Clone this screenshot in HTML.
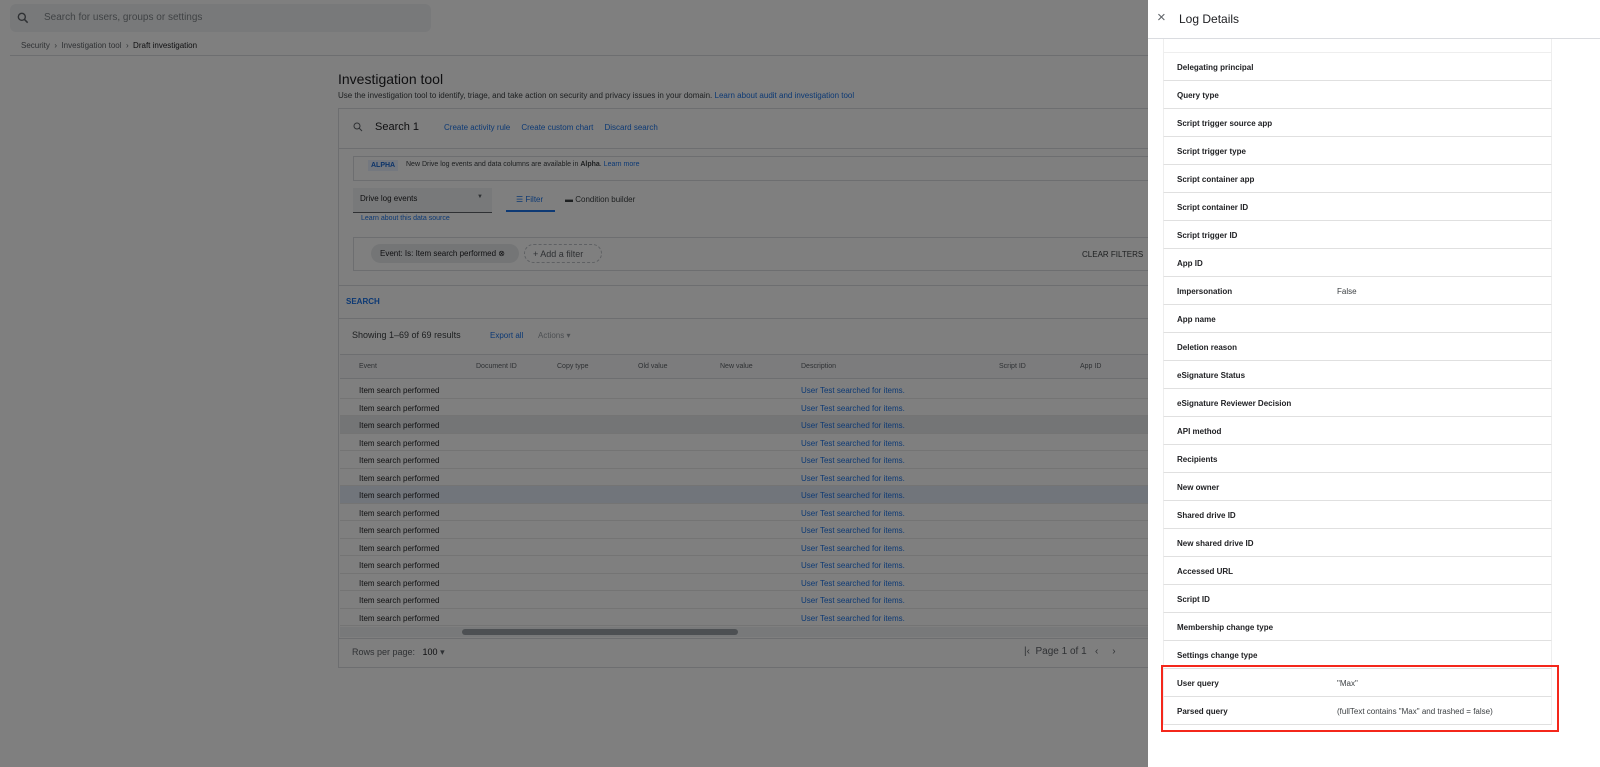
<!DOCTYPE html>
<html><head><meta charset="utf-8"><style>
*{box-sizing:border-box;margin:0;padding:0}
body{width:1600px;height:767px;overflow:hidden;font-family:"Liberation Sans",sans-serif;background:#fff;position:relative;color:#202124}
.a{position:absolute}
.blue{color:#1a73e8}
.ov{position:absolute;left:0;top:0;width:1600px;height:767px;background:rgba(0,0,0,0.5)}
.panel{position:absolute;left:1148px;top:0;width:452px;height:767px;background:#fff}
.row{position:absolute;left:15px;width:389px;height:28px;border-bottom:1px solid #e0e0e0;border-left:1px solid #eee;border-right:1px solid #eee;font-size:8px;font-weight:bold;color:#202124;padding:10px 0 0 13px}
.row span{position:absolute;left:173px;top:10px;font-weight:normal;color:#3c4043}
.tr{position:absolute;left:340px;width:810px;height:17.5px;border-bottom:1px solid #e8e8e8;font-size:8px}
.tr .e{position:absolute;left:19px;top:5px}
.tr .d{position:absolute;left:461px;top:5px;color:#1a73e8}
.th{position:absolute;top:363px;font-size:7px;color:#5f6368}
</style></head><body>
<div class="a" style="left:10px;top:4px;width:421px;height:28px;background:#f1f3f4;border-radius:6px"></div>
<svg class="a" style="left:16px;top:11px" width="14" height="14" viewBox="0 0 24 24"><circle cx="10" cy="10" r="6" fill="none" stroke="#5f6368" stroke-width="2.4"/><path d="M14.5 14.5L20 20" stroke="#5f6368" stroke-width="2.6"/></svg>
<div class="a" style="left:44px;top:12px;font-size:10px;color:#80868b">Search for users, groups or settings</div>
<div class="a" style="left:21px;top:41px;font-size:8px;color:#5f6368">Security &nbsp;›&nbsp; Investigation tool &nbsp;›&nbsp; <span style="color:#202124">Draft investigation</span></div>
<div class="a" style="left:10px;top:55px;width:1140px;height:1px;background:#dadce0"></div>
<div class="a" style="left:338px;top:71px;font-size:14px">Investigation tool</div>
<div class="a" style="left:338px;top:91px;font-size:8px;color:#3c4043">Use the investigation tool to identify, triage, and take action on security and privacy issues in your domain. <span class="blue">Learn about audit and investigation tool</span></div>
<div class="a" style="left:338px;top:108px;width:820px;height:560px;border:1px solid #dadce0;background:#fff"></div>
<svg class="a" style="left:352px;top:121px" width="12" height="12" viewBox="0 0 24 24"><circle cx="10" cy="10" r="6" fill="none" stroke="#5f6368" stroke-width="2"/><path d="M14.5 14.5L20 20" stroke="#5f6368" stroke-width="2"/></svg>
<div class="a" style="left:375px;top:121px;font-size:11px">Search 1</div>
<div class="a blue" style="left:444px;top:123px;font-size:8px">Create activity rule &nbsp;&nbsp;&nbsp; Create custom chart &nbsp;&nbsp;&nbsp; Discard search</div>
<div class="a" style="left:338px;top:148px;width:820px;height:1px;background:#dadce0"></div>
<div class="a" style="left:353px;top:156px;width:800px;height:25px;border:1px solid #dadce0"></div>
<div class="a" style="left:368px;top:160px;padding:2px 3px;background:#e8f0fe;color:#1967d2;font-size:7px;font-weight:bold">ALPHA</div>
<div class="a" style="left:406px;top:161px;font-size:7px;color:#3c4043">New Drive log events and data columns are available in <b>Alpha</b>. <span class="blue">Learn more</span></div>
<div class="a" style="left:353px;top:188px;width:139px;height:25px;background:#f1f3f4;border-bottom:1px solid #5f6368;font-size:8px;padding:6px 0 0 7px">Drive log events<span style="position:absolute;right:9px;top:6px;font-size:6px;color:#5f6368">▼</span></div>
<div class="a blue" style="left:516px;top:195px;font-size:8px">☰ Filter</div>
<div class="a" style="left:506px;top:210px;width:49px;height:2px;background:#1a73e8"></div>
<div class="a" style="left:565px;top:195px;font-size:8px;color:#3c4043">▬ Condition builder</div>
<div class="a blue" style="left:361px;top:215px;font-size:7px">Learn about this data source</div>
<div class="a" style="left:353px;top:237px;width:800px;height:34px;border:1px solid #dadce0"></div>
<div class="a" style="left:371px;top:244px;width:148px;height:19px;border-radius:10px;background:#e8eaed;font-size:8px;padding:5px 0 0 9px">Event: Is: Item search performed ⊗</div>
<div class="a" style="left:524px;top:244px;width:78px;height:19px;border-radius:10px;border:1px dashed #bdc1c6;font-size:9px;padding:4px 0 0 8px;color:#5f6368">+ Add a filter</div>
<div class="a" style="left:1082px;top:250px;font-size:8px;color:#3c4043">CLEAR FILTERS</div>
<div class="a" style="left:338px;top:285px;width:820px;height:1px;background:#dadce0"></div>
<div class="a blue" style="left:346px;top:297px;font-size:8px;font-weight:bold">SEARCH</div>
<div class="a" style="left:338px;top:318px;width:820px;height:1px;background:#dadce0"></div>
<div class="a" style="left:352px;top:330px;font-size:9px;color:#3c4043">Showing 1–69 of 69 results</div>
<div class="a blue" style="left:490px;top:331px;font-size:8px">Export all</div>
<div class="a" style="left:538px;top:331px;font-size:8px;color:#9aa0a6">Actions ▾</div>
<div class="a" style="left:340px;top:354px;width:810px;height:25px;background:#f8f9fa;border-top:1px solid #dadce0;border-bottom:1px solid #dadce0"></div>
<div class="th" style="left:359px">Event</div><div class="th" style="left:476px">Document ID</div><div class="th" style="left:557px">Copy type</div><div class="th" style="left:638px">Old value</div><div class="th" style="left:720px">New value</div><div class="th" style="left:801px">Description</div><div class="th" style="left:999px">Script ID</div><div class="th" style="left:1080px">App ID</div>
<div class="tr" style="top:381px"><span class="e">Item search performed</span><span class="d">User Test searched for items.</span></div>
<div class="tr" style="top:398.5px"><span class="e">Item search performed</span><span class="d">User Test searched for items.</span></div>
<div class="tr" style="top:416px;background:#e8eaed"><span class="e">Item search performed</span><span class="d">User Test searched for items.</span></div>
<div class="tr" style="top:433.5px"><span class="e">Item search performed</span><span class="d">User Test searched for items.</span></div>
<div class="tr" style="top:451px"><span class="e">Item search performed</span><span class="d">User Test searched for items.</span></div>
<div class="tr" style="top:468.5px"><span class="e">Item search performed</span><span class="d">User Test searched for items.</span></div>
<div class="tr" style="top:486px;background:#e3eaf6"><span class="e">Item search performed</span><span class="d">User Test searched for items.</span></div>
<div class="tr" style="top:503.5px"><span class="e">Item search performed</span><span class="d">User Test searched for items.</span></div>
<div class="tr" style="top:521px"><span class="e">Item search performed</span><span class="d">User Test searched for items.</span></div>
<div class="tr" style="top:538.5px"><span class="e">Item search performed</span><span class="d">User Test searched for items.</span></div>
<div class="tr" style="top:556px"><span class="e">Item search performed</span><span class="d">User Test searched for items.</span></div>
<div class="tr" style="top:573.5px"><span class="e">Item search performed</span><span class="d">User Test searched for items.</span></div>
<div class="tr" style="top:591px"><span class="e">Item search performed</span><span class="d">User Test searched for items.</span></div>
<div class="tr" style="top:608.5px"><span class="e">Item search performed</span><span class="d">User Test searched for items.</span></div>
<div class="a" style="left:340px;top:627px;width:810px;height:10px;background:#f1f3f4"></div>
<div class="a" style="left:462px;top:629px;width:276px;height:6px;border-radius:3px;background:#9aa0a6"></div>
<div class="a" style="left:338px;top:638px;width:820px;height:1px;background:#dadce0"></div>
<div class="a" style="left:352px;top:647px;font-size:9px;color:#5f6368">Rows per page: &nbsp;&nbsp;<span style="color:#202124">100</span> ▾</div>
<div class="a" style="left:1024px;top:646px;font-size:10px;color:#5f6368">|‹ &nbsp;Page 1 of 1 &nbsp;&nbsp;‹ &nbsp;&nbsp;&nbsp;&nbsp;›</div>
<div class="ov"></div>
<div class="panel">
<div class="a" style="left:9px;top:9px;font-size:15px;color:#5f6368">×</div>
<div class="a" style="left:31px;top:12px;font-size:12px;color:#202124">Log Details</div>
<div class="a" style="left:0;top:38px;width:452px;height:1px;background:#dadce0"></div>
<div class="a" style="left:15px;top:39px;width:389px;height:14px;border:1px solid #eee;border-top:none"></div>
<div class="row" style="top:53px">Delegating principal</div>
<div class="row" style="top:81px">Query type</div>
<div class="row" style="top:109px">Script trigger source app</div>
<div class="row" style="top:137px">Script trigger type</div>
<div class="row" style="top:165px">Script container app</div>
<div class="row" style="top:193px">Script container ID</div>
<div class="row" style="top:221px">Script trigger ID</div>
<div class="row" style="top:249px">App ID</div>
<div class="row" style="top:277px">Impersonation<span>False</span></div>
<div class="row" style="top:305px">App name</div>
<div class="row" style="top:333px">Deletion reason</div>
<div class="row" style="top:361px">eSignature Status</div>
<div class="row" style="top:389px">eSignature Reviewer Decision</div>
<div class="row" style="top:417px">API method</div>
<div class="row" style="top:445px">Recipients</div>
<div class="row" style="top:473px">New owner</div>
<div class="row" style="top:501px">Shared drive ID</div>
<div class="row" style="top:529px">New shared drive ID</div>
<div class="row" style="top:557px">Accessed URL</div>
<div class="row" style="top:585px">Script ID</div>
<div class="row" style="top:613px">Membership change type</div>
<div class="row" style="top:641px">Settings change type</div>
<div class="row" style="top:669px">User query<span>"Max"</span></div>
<div class="row" style="top:697px">Parsed query<span>(fullText contains "Max" and trashed = false)</span></div>
<div class="a" style="left:13px;top:665px;width:398px;height:67px;border:2.5px solid #f4271b"></div>
</div>
</body></html>
